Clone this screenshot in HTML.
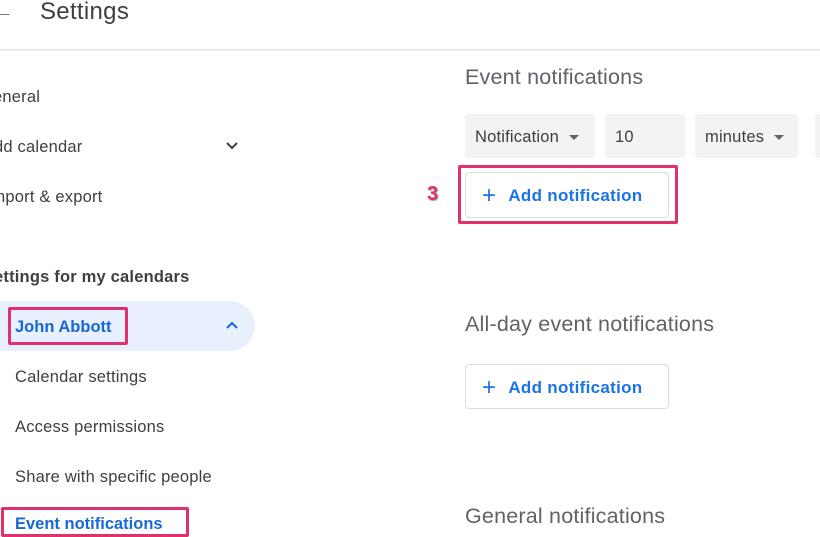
<!DOCTYPE html>
<html><head><meta charset="utf-8"><style>
*{margin:0;padding:0;box-sizing:border-box}
body{width:820px;height:524px;overflow:hidden;background:#fff;font-family:"Liberation Sans",sans-serif;color:#3c4043;position:relative}
.a{position:absolute;white-space:nowrap}
.nav{font-size:16.5px;color:#3c4043;letter-spacing:0.2px}
.sel{background:#f1f3f4;border-radius:4px;height:44px;font-size:16.5px;color:#3c4043;line-height:46px;padding-left:10px;letter-spacing:0.2px}
.btn{border:1px solid #dadce0;border-radius:4px;color:#1a73e8;font-size:17px;font-weight:bold;line-height:46px;padding-left:16px;letter-spacing:0.3px}
.pink{border:3px solid #e0306e;border-radius:2px}
.h2{font-size:21.5px;color:#5f6368;letter-spacing:0.2px}
.tri{display:inline-block;width:0;height:0;border-left:5px solid transparent;border-right:5px solid transparent;border-top:5px solid #5f6368;vertical-align:middle;margin-left:10px}
</style></head><body>
<div class="a" style="left:-8px;top:0;font-size:22px;color:#5f6368;line-height:22px">←</div>
<div class="a" style="left:40px;top:-2px;font-size:24px;color:#3c4043;letter-spacing:0.3px">Settings</div>
<div class="a" style="left:0;top:49px;width:820px;height:2px;background:linear-gradient(#e0e0e0,#f4f4f4)"></div>

<div class="a nav" style="left:-7px;top:88px">eneral</div>
<div class="a nav" style="left:-6px;top:138px">dd calendar</div>
<svg class="a" style="left:225px;top:140px" width="14" height="12"><path d="M2 3 L7 8 L12 3" stroke="#3c4043" stroke-width="2" fill="none"/></svg>
<div class="a nav" style="left:-4px;top:188px">nport &amp; export</div>
<div class="a nav" style="left:-6px;top:268px;font-weight:bold;color:#3c4043">ettings for my calendars</div>
<div class="a" style="left:-30px;top:301px;width:285px;height:50px;background:#e8f0fe;border-radius:0 25px 25px 0"></div>
<div class="a pink" style="left:8px;top:307px;width:120px;height:38px"></div>
<div class="a" style="left:15px;top:318px;font-size:16.5px;font-weight:bold;color:#1967d2">John Abbott</div>
<svg class="a" style="left:225px;top:320px" width="14" height="12"><path d="M2 8 L7 3 L12 8" stroke="#1967d2" stroke-width="2" fill="none"/></svg>
<div class="a nav" style="left:15px;top:368px">Calendar settings</div>
<div class="a nav" style="left:15px;top:418px">Access permissions</div>
<div class="a nav" style="left:15px;top:468px">Share with specific people</div>
<div class="a pink" style="left:1px;top:507px;width:188px;height:30px"></div>
<div class="a" style="left:15px;top:515px;font-size:16.5px;font-weight:bold;color:#1967d2">Event notifications</div>

<div class="a h2" style="left:465px;top:65px">Event notifications</div>
<div class="a sel" style="left:465px;top:114px;width:130px">Notification<span class="tri"></span></div>
<div class="a sel" style="left:605px;top:114px;width:80px">10</div>
<div class="a sel" style="left:695px;top:114px;width:103px">minutes<span class="tri"></span></div>
<div class="a sel" style="left:815px;top:114px;width:20px"></div>
<div class="a" style="left:427px;top:183px;font-size:20px;font-weight:bold;color:#e0306e;text-shadow:1px 1px 1px #999">3</div>
<div class="a pink" style="left:458px;top:165px;width:220px;height:59px"></div>
<div class="a btn" style="left:465px;top:172px;width:204px;height:46px"><span style="font-weight:normal;font-size:24px;vertical-align:top;margin-right:12px;color:#1a73e8">+</span>Add notification</div>

<div class="a h2" style="left:465px;top:312px">All-day event notifications</div>
<div class="a btn" style="left:465px;top:364px;width:204px;height:45px"><span style="font-weight:normal;font-size:24px;vertical-align:top;margin-right:12px">+</span>Add notification</div>
<div class="a h2" style="left:465px;top:504px">General notifications</div>
</body></html>
